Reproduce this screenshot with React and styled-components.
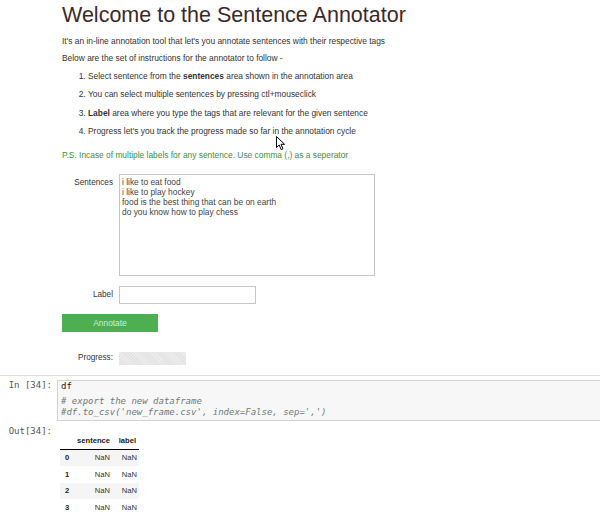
import React from "react";
import styled, { createGlobalStyle } from "styled-components";

const Global = createGlobalStyle`
  html, body { margin: 0; padding: 0; overflow: hidden; background: #fff; }
  body { font-family: "Liberation Sans", Arial, sans-serif; color: #333; }
`;

const Page = styled.div`
  position: relative;
  width: 600px;
  height: 521px;
  overflow: hidden;
`;

const WidgetArea = styled.div`
  padding-left: 62px;
  padding-bottom: 8px;
`;

const Title = styled.h1`
  margin: 2px 0 4px;
  font-size: 21.5px;
  line-height: 26px;
  font-weight: normal;
  color: #3b2a2c;
  white-space: nowrap;
`;

const Para = styled.p`
  margin: 0;
  font-size: 8.4px;
  line-height: ${(p) => p.$lh || 18}px;
  color: ${(p) => (p.$green ? "#3a923a" : "#333")};
  margin-top: ${(p) => p.$mt || 0}px;
  white-space: nowrap;
`;

const Steps = styled.ol`
  margin: 0;
  padding-left: 26px;
  font-size: 8.4px;
  line-height: 18.3px;
  color: #333;
  white-space: nowrap;
`;

const Row = styled.div`
  display: flex;
  align-items: ${(p) => p.$align || "center"};
  gap: 6px;
  margin-top: ${(p) => p.$mt || 0}px;
  height: ${(p) => (p.$h ? `${p.$h}px` : "auto")};
`;

const FieldLabel = styled.label`
  width: 51px;
  flex: none;
  text-align: right;
  font-size: 8.2px;
  line-height: 18px;
  color: #333;
`;

const SentenceBox = styled.div`
  box-sizing: border-box;
  width: 256px;
  height: 102px;
  padding: 2px 2px 1px;
  border: 1px solid #c6c6c6;
  font-size: 8.4px;
  line-height: 10px;
  color: #444;
  background: #fff;
  white-space: pre;
  overflow: hidden;
`;

const LabelInput = styled.input`
  box-sizing: border-box;
  width: 137px;
  height: 18px;
  margin: 0;
  padding: 0 3px;
  border: 1px solid #c6c6c6;
  font-family: "Liberation Sans", Arial, sans-serif;
  font-size: 8.4px;
  background: #fff;
  outline: none;
`;

const AnnotateButton = styled.button`
  display: block;
  box-sizing: border-box;
  width: 96px;
  height: 18px;
  margin: 10px 0 0;
  padding: 0;
  border: none;
  background: #4caf50;
  color: #d6ecd7;
  font-family: "Liberation Sans", Arial, sans-serif;
  font-size: 8.4px;
  cursor: default;
`;

const ProgressBar = styled.div`
  width: 67px;
  height: 13px;
  background: repeating-linear-gradient(
    45deg,
    #e3e3e3 0px,
    #e3e3e3 1px,
    #ececec 1px,
    #ececec 2px
  );
`;

const Separator = styled.div`
  height: 1px;
  background: #dedede;
`;

const Cell = styled.div`
  display: flex;
  align-items: flex-start;
  margin-top: ${(p) => p.$mt || 0}px;
`;

const Prompt = styled.div`
  width: 57px;
  flex: none;
  box-sizing: border-box;
  padding-right: 5px;
  text-align: right;
  font-family: "DejaVu Sans Mono", monospace;
  font-size: 9px;
  line-height: ${(p) => p.$lh || 11}px;
  color: #555;
  white-space: pre;
`;

const CodeBox = styled.div`
  flex: 1;
  margin-right: -4px;
  box-sizing: border-box;
  height: 41px;
  padding: 0 3px;
  border: 1px solid #d3d3d3;
  background: #f7f7f7;
  font-family: "DejaVu Sans Mono", monospace;
  font-size: 9px;
  line-height: 11px;
  color: #222;
  white-space: pre;
`;

const CodeLine = styled.div`
  margin-top: ${(p) => p.$mt || 0}px;
  color: ${(p) => (p.$comment ? "#707a7a" : "#222")};
  font-style: ${(p) => (p.$comment ? "italic" : "normal")};
`;

const Frame = styled.table`
  margin: 8px 0 0 3px;
  width: 79px;
  table-layout: fixed;
  border-collapse: collapse;
  font-family: "Liberation Sans", Arial, sans-serif;
  font-size: 7.6px;
  color: #222;
`;

const HeadCell = styled.th`
  box-sizing: border-box;
  height: 17px;
  padding: 0 ${(p) => p.$pr || 0}px 0 0;
  width: ${(p) => p.$w}px;
  text-align: right;
  font-weight: bold;
  border-bottom: 1px solid #000;
  vertical-align: middle;
  white-space: nowrap;
`;

const BodyRow = styled.tr`
  height: 16.7px;
  background: ${(p) => (p.$striped ? "#f5f5f5" : "transparent")};
`;

const IndexCell = styled.th`
  padding: 0 0 0 5px;
  text-align: left;
  font-weight: bold;
`;

const ValueCell = styled.td`
  padding: 0 ${(p) => p.$pr || 0}px 0 0;
  text-align: right;
  color: #333;
`;

const Cursor = styled.svg`
  position: absolute;
  left: 276px;
  top: 136px;
`;

const sentences = [
  "i like to eat food",
  "i like to play hockey",
  "food is the best thing that can be on earth",
  "do you know how to play chess",
].join("\n");

export default function App() {
  return (
    <Page>
      <Global />
      <WidgetArea>
        <Title>Welcome to the Sentence Annotator</Title>
        <Para>It's an in-line annotation tool that let's you annotate sentences with their respective tags</Para>
        <Para $lh={17}>Below are the set of instructions for the annotator to follow -</Para>
        <Steps>
          <li>Select sentence from the <b>sentences</b> area shown in the annotation area</li>
          <li>You can select multiple sentences by pressing ctl+mouseclick</li>
          <li><b>Label</b> area where you type the tags that are relevant for the given sentence</li>
          <li>Progress let's you track the progress made so far in the annotation cycle</li>
        </Steps>
        <Para $green $mt={6}>P.S. Incase of multiple labels for any sentence. Use comma (,) as a seperator</Para>

        <Row $align="flex-start" $mt={10}>
          <FieldLabel>Sentences</FieldLabel>
          <SentenceBox role="textbox" aria-multiline="true">{sentences}</SentenceBox>
        </Row>
        <Row $mt={10}>
          <FieldLabel>Label</FieldLabel>
          <LabelInput spellCheck={false} defaultValue="" />
        </Row>
        <AnnotateButton>Annotate</AnnotateButton>
        <Row $mt={17} $h={18}>
          <FieldLabel>Progress:</FieldLabel>
          <ProgressBar />
        </Row>
      </WidgetArea>
      <Separator />

      <Cell $mt={4}>
        <Prompt $lh={11}>{"In [34]:"}</Prompt>
        <CodeBox>
          <CodeLine>df</CodeLine>
          <CodeLine $comment $mt={4}># export the new dataframe</CodeLine>
          <CodeLine $comment>#df.to_csv('new_frame.csv', index=False, sep=',')</CodeLine>
        </CodeBox>
      </Cell>

      <Cell $mt={3}>
        <Prompt $lh={14}>{"Out[34]:"}</Prompt>
        <Frame>
          <thead>
            <tr>
              <HeadCell $w={15} />
              <HeadCell $w={38} $pr={3}>sentence</HeadCell>
              <HeadCell $w={26} $pr={3}>label</HeadCell>
            </tr>
          </thead>
          <tbody>
            {[0, 1, 2, 3].map((i) => (
              <BodyRow key={i} $striped={i % 2 === 0}>
                <IndexCell>{i}</IndexCell>
                <ValueCell $pr={3}>NaN</ValueCell>
                <ValueCell $pr={2}>NaN</ValueCell>
              </BodyRow>
            ))}
          </tbody>
        </Frame>
      </Cell>

      <Cursor width="10" height="15" viewBox="0 0 10 15">
        <path d="M0.5 0.5 L0.5 11.5 L3.2 9 L5.2 13.6 L7 12.8 L5 8.3 L8.6 8.3 Z" fill="#fff" stroke="#000" strokeWidth="1" strokeLinejoin="round" />
      </Cursor>
    </Page>
  );
}
